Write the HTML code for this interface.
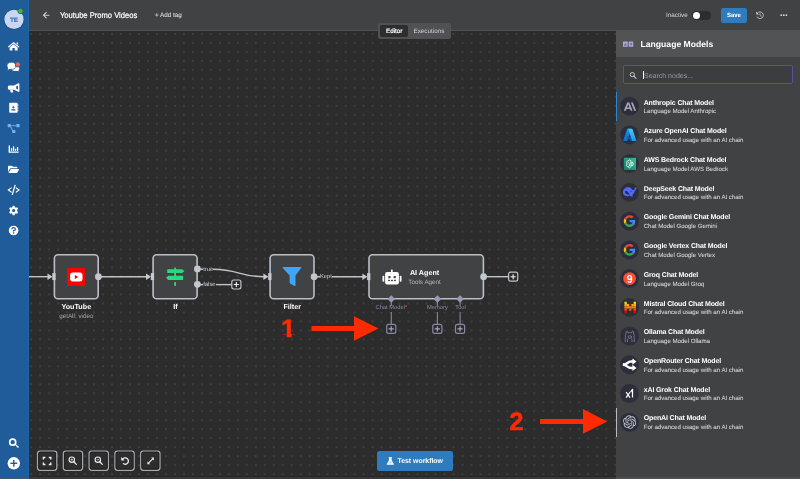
<!DOCTYPE html>
<html lang="en">
<head>
<meta charset="utf-8">
<title>Youtube Promo Videos</title>
<style>
*{box-sizing:border-box;margin:0;padding:0}
html,body{text-rendering:geometricPrecision;width:800px;height:479px;overflow:hidden;background:#2c2c2c;font-family:"Liberation Sans",sans-serif;}
.abs{position:absolute}
#app{position:relative;width:800px;height:479px;overflow:hidden;will-change:transform}
#canvas{position:absolute;left:29px;top:31px;width:771px;height:448px;background-color:#2c2c2c;
  background-image:radial-gradient(circle at 1px 1px,#5a5a5a 0.4px,rgba(90,90,90,0) 0.9px);background-size:8.99px 8.99px;background-position:1.2px 1.9px}
#side{position:absolute;left:0;top:0;width:29px;height:479px;background:#1f5c99;border-right:1px solid #1c66ad}
#top{position:absolute;left:29px;top:0;width:771px;height:31px;background:#414244;border-bottom:1px solid #515254}
#panel{position:absolute;left:616px;top:31px;width:184px;height:448px;background:#414244}
#phead{position:absolute;left:0;top:0;width:184px;height:26px;background:#525355}
.t{position:absolute;white-space:nowrap;line-height:1}
.nl{font-weight:bold;font-size:7.2px;color:#fff;text-align:center;transform:translateX(-50%)}
.ns{font-size:6.3px;color:#a4a6ad;text-align:center;transform:translateX(-50%)}
.it{position:absolute;left:27.7px;letter-spacing:-0.13px;font-weight:bold;font-size:7px;color:#fff;white-space:nowrap;line-height:1}
.is{position:absolute;left:27.7px;letter-spacing:-0.03px;font-size:6.15px;color:#d0d1d6;-webkit-text-stroke:0.08px #d0d1d6;white-space:nowrap;line-height:1}
</style>
</head>
<body>
<div id="app">
<div id="canvas"></div>

<!-- connections svg -->
<svg class="abs" style="left:0;top:0" width="800" height="479" viewBox="0 0 800 479">
 <g stroke="#c0c3cb" stroke-width="1.4" fill="none">
  <path d="M29 276.7H49"/>
  <path d="M99 276.7H147"/>
  <path d="M200 269.3H213 C238 269.3 240 276.7 264 276.7"/>
  <path d="M200 284.6H232"/>
  <path d="M317 276.7H363"/>
  <path d="M484 276.7H508"/>
 </g>
 <g stroke="#8787a3" stroke-width="1.1" fill="none">
  <path d="M391.3 302V324"/><path d="M437.4 302V324"/><path d="M460.1 302V324"/>
 </g>
 <g fill="#414244" stroke="#bcbfc8" stroke-width="1.6">
  <rect x="54.4" y="254.7" width="43.8" height="44.1" rx="3.6"/>
  <rect x="153.1" y="254.7" width="44.0" height="44.1" rx="3.6"/>
  <rect x="270.1" y="254.7" width="43.9" height="44.1" rx="3.6"/>
  <rect x="369.0" y="254.7" width="114.4" height="44.1" rx="3.6"/>
 </g>
 <g fill="#c3c6ce">
  <circle cx="98.4" cy="276.7" r="3.4"/>
  <circle cx="197.4" cy="268.9" r="3.4"/>
  <circle cx="197.4" cy="284.3" r="3.4"/>
  <circle cx="314.1" cy="276.7" r="3.4"/>
  <circle cx="483.6" cy="276.7" r="3.4"/>
 </g>
 <g>
  <rect x="231.8" y="280.0" width="9.1" height="9" rx="1.9" fill="#2c2c2c" stroke="#c0c3cb" stroke-width="1.2"/><path d="M233.8 284.5H238.9M236.35 281.95V287.05" stroke="#f0f1f3" stroke-width="1.15" fill="none"/>
  <rect x="508.6" y="272.2" width="9.1" height="9" rx="1.9" fill="#2c2c2c" stroke="#c0c3cb" stroke-width="1.2"/><path d="M510.6 276.7H515.7M513.15 274.15V279.25" stroke="#f0f1f3" stroke-width="1.15" fill="none"/>
  <rect x="386.7" y="324.4" width="9.1" height="9" rx="1.9" fill="#2c2c2c" stroke="#8888a6" stroke-width="1.2"/><path d="M388.7 328.9H393.8M391.25 326.35V331.45" stroke="#a6a6c0" stroke-width="1.15" fill="none"/>
  <rect x="432.8" y="324.4" width="9.1" height="9" rx="1.9" fill="#2c2c2c" stroke="#8888a6" stroke-width="1.2"/><path d="M434.8 328.9H439.9M437.35 326.35V331.45" stroke="#a6a6c0" stroke-width="1.15" fill="none"/>
  <rect x="455.5" y="324.4" width="9.1" height="9" rx="1.9" fill="#2c2c2c" stroke="#8888a6" stroke-width="1.2"/><path d="M457.5 328.9H462.6M460.05 326.35V331.45" stroke="#a6a6c0" stroke-width="1.15" fill="none"/>
 </g>
 <!-- red arrows -->
 <g fill="#ff2a00">
  <path d="M311.5 326H354V316.2L378.5 328.5L354 340.8V331H311.5Z"/>
  <path d="M540 419H583V409L607.2 421.4L583 433.8V424H540Z"/>
 </g>
</svg>

<!-- nodes -->



<!-- node icons -->
<svg class="abs" style="left:66.9px;top:267.7px" width="18.5" height="18.5" viewBox="0 0 18.5 18.5"><rect width="18.5" height="18.5" fill="#f00"/><rect x="3.1" y="4.6" width="12.4" height="8.8" rx="2.6" fill="#fff"/><path d="M7.8 7.1L11.3 9L7.8 10.9Z" fill="#f00"/></svg>
<svg class="abs" style="left:165px;top:267px" width="21" height="20" viewBox="165 267 21 20"><g fill="#30d67a"><rect x="174.2" y="267.5" width="1.8" height="12.4" rx="0.5"/><rect x="174.2" y="282.1" width="1.8" height="3.9" rx="0.5"/><path d="M167.9 269.2H182.2L184.4 271.15L182.2 273.1H167.9Q167.2 273.1 167.2 272.4V269.9Q167.2 269.2 167.9 269.2Z"/><path d="M182.5 275.7H168.2L166 277.8L168.2 279.9H182.5Q183.2 279.9 183.2 279.2V276.4Q183.2 275.7 182.5 275.7Z"/></g></svg>
<svg class="abs" style="left:281px;top:266px" width="22" height="22" viewBox="281 266 22 22"><path d="M283.3 267.1H300.7Q302 267.1 301.2 268.1L295.5 275.6V285.4Q295.5 286.5 294.6 285.9L290.1 283.4Q289.6 283.1 289.6 282.5V275.6L282.8 268.1Q282 267.1 283.3 267.1Z" fill="#3fa5f6"/></svg>
<svg class="abs" style="left:382px;top:269px" width="20" height="16" viewBox="382 269 20 16"><g fill="#fff"><rect x="391" y="269.4" width="1.7" height="3.4" rx="0.5"/><rect x="382.5" y="275.7" width="1.8" height="6.1" rx="0.7"/><rect x="399.7" y="275.7" width="1.8" height="6.1" rx="0.7"/><rect x="385.1" y="272" width="13.8" height="12.4" rx="2"/></g><g fill="#414244"><rect x="388.3" y="276" width="2.2" height="2.2" rx="0.5"/><rect x="393.6" y="276" width="2.2" height="2.2" rx="0.5"/><rect x="388.1" y="279.8" width="1.9" height="1.3"/><rect x="391" y="279.8" width="1.9" height="1.3"/><rect x="393.9" y="279.8" width="1.9" height="1.3"/></g></svg>

<!-- node labels -->
<div class="t nl" style="left:76.3px;top:303px">YouTube</div>
<div class="t ns" style="left:76.3px;top:314px">getAll: video</div>
<div class="t nl" style="left:175.4px;top:303px">If</div>
<div class="t nl" style="left:292.2px;top:303px">Filter</div>
<div class="t" style="left:409.9px;top:269.2px;font-weight:bold;font-size:7.2px;color:#fff">AI Agent</div>
<div class="t" style="left:408.3px;top:280px;font-size:6.3px;color:#b4b6bd">Tools Agent</div>
<div class="t" style="left:203.2px;top:268px;font-size:5.9px;color:#d0d2d8;background:#2c2c2c">true</div>
<div class="t" style="left:203.2px;top:283.4px;font-size:5.9px;color:#d0d2d8;background:#2c2c2c">false</div>
<div class="t" style="left:319.9px;top:275px;font-size:5.8px;color:#d0d2d8;background:#2c2c2c">Kept</div>
<div class="t" style="left:375.5px;top:306px;font-size:5.75px;color:#8c8ca8;background:#2c2c2c">Chat Model<span style="color:#ff4a4a">*</span></div>
<div class="t" style="left:427.1px;top:306px;font-size:5.75px;color:#8c8ca8;background:#2c2c2c">Memory</div>
<div class="t" style="left:455.3px;top:306px;font-size:5.75px;color:#8c8ca8;background:#2c2c2c">Tool</div>

<div class="t" id="n1" style="left:281.2px;top:317px;clip-path:polygon(0 0,100% 0,100% 17.5px,10.45px 17.5px,10.45px 100%,5.5px 100%,5.5px 17.5px,0 17.5px);font-weight:bold;font-size:25px;-webkit-text-stroke:0.6px #ff2a00;color:#ff2a00">1</div>
<div class="t" id="n2" style="left:509.5px;top:410px;font-weight:bold;font-size:25px;-webkit-text-stroke:0.6px #ff2a00;color:#ff2a00">2</div>

<!-- canvas controls -->

<!-- test workflow -->
<div class="abs" style="left:377px;top:451px;width:76px;height:20px;border-radius:2.5px;background:#2f7bc0"></div>
<div class="t" style="left:397.5px;top:459.4px;font-weight:bold;font-size:6.9px;color:#fff">Test workflow</div>

<!-- top bar -->
<div id="top"></div>
<div class="t" style="left:60px;top:11px;font-size:8.3px;transform:scaleX(0.915);transform-origin:0 0;-webkit-text-stroke:0.2px #fff;color:#fff">Youtube Promo Videos</div>
<div class="t" style="left:155px;top:12.9px;font-size:6.3px;color:#d4d6da;-webkit-text-stroke:0.12px #d4d6da">+ Add tag</div>
<div class="abs" style="left:378px;top:23px;width:73px;height:16px;border-radius:2.5px;background:#505153"></div>
<div class="abs" style="left:380px;top:25px;width:28px;height:12px;border-radius:2px;background:#2d2e2f"></div>
<div class="t" style="left:386px;top:29px;font-size:6.3px;-webkit-text-stroke:0.2px #fff;color:#fff">Editor</div>
<div class="t" style="left:413.5px;top:29px;font-size:6.3px;color:#d2d4d9">Executions</div>
<div class="t" style="left:666px;top:13px;font-size:6.3px;color:#d6d7db">Inactive</div>
<div class="abs" style="left:692px;top:11.2px;width:19px;height:8.6px;border-radius:4.3px;background:#2c2d2e"></div>
<div class="abs" style="left:692.6px;top:11.6px;width:7.8px;height:7.8px;border-radius:50%;background:#fff"></div>
<div class="abs" style="left:721px;top:8px;width:26px;height:14.6px;border-radius:2px;background:#2f7bc0"></div>
<div class="t" style="left:727px;top:13px;font-weight:bold;font-size:6px;letter-spacing:-0.1px;color:#fff">Save</div>

<!-- right panel -->
<div id="panel">
 <div id="phead"></div>
 <div class="t" style="left:24.6px;top:8.7px;font-weight:bold;font-size:8.6px;color:#fff">Language Models</div>
 <div class="abs" style="left:7px;top:34px;width:170px;height:19px;border:1px solid #5b509e;border-radius:2px;background:#3c3d3f"></div>
 <div class="t" style="left:28px;top:41.6px;font-size:7px;color:#9a9ca4">Search nodes...</div>
 <div class="abs" style="left:27.3px;top:40.2px;width:0.7px;height:7.6px;background:#fff"></div>
 <div class="abs" style="left:0;top:61px;width:1px;height:29px;background:#2b87d4"></div>
 <div class="abs" style="left:0;top:376.5px;width:1px;height:29px;background:#b8bac2"></div>
 <div class="it" style="top:69px">Anthropic Chat Model</div>
 <div class="is" style="top:78px">Language Model Anthropic</div>
 <div class="it" style="top:97px">Azure OpenAI Chat Model</div>
 <div class="is" style="top:107px">For advanced usage with an AI chain</div>
 <div class="it" style="top:126px">AWS Bedrock Chat Model</div>
 <div class="is" style="top:136px">Language Model AWS Bedrock</div>
 <div class="it" style="top:155px">DeepSeek Chat Model</div>
 <div class="is" style="top:164px">For advanced usage with an AI chain</div>
 <div class="it" style="top:183px">Google Gemini Chat Model</div>
 <div class="is" style="top:193px">Chat Model Google Gemini</div>
 <div class="it" style="top:212px">Google Vertex Chat Model</div>
 <div class="is" style="top:222px">Chat Model Google Vertex</div>
 <div class="it" style="top:241px">Groq Chat Model</div>
 <div class="is" style="top:251px">Language Model Groq</div>
 <div class="it" style="top:270px">Mistral Cloud Chat Model</div>
 <div class="is" style="top:279px">For advanced usage with an AI chain</div>
 <div class="it" style="top:298px">Ollama Chat Model</div>
 <div class="is" style="top:308px">Language Model Ollama</div>
 <div class="it" style="top:327px">OpenRouter Chat Model</div>
 <div class="is" style="top:337px">For advanced usage with an AI chain</div>
 <div class="it" style="top:356px">xAI Grok Chat Model</div>
 <div class="is" style="top:365px">For advanced usage with an AI chain</div>
 <div class="it" style="top:384px">OpenAI Chat Model</div>
 <div class="is" style="top:394px">For advanced usage with an AI chain</div>
</div>

<!-- LIST ICONS -->
<svg class="abs" style="left:0;top:0" width="800" height="479" viewBox="0 0 800 479">
<defs><linearGradient id="azr" x1="0" y1="0" x2="0" y2="1"><stop offset="0" stop-color="#3ccbf4"/><stop offset="1" stop-color="#2892df"/></linearGradient><linearGradient id="azl" x1="0" y1="0" x2="0" y2="1"><stop offset="0" stop-color="#1a8fe6"/><stop offset="1" stop-color="#0a6fcc"/></linearGradient><linearGradient id="aws" x1="0" y1="1" x2="1" y2="0"><stop offset="0" stop-color="#167a64"/><stop offset="1" stop-color="#33c29a"/></linearGradient><linearGradient id="mis" x1="0" y1="0" x2="0" y2="1"><stop offset="0" stop-color="#ffd800"/><stop offset="0.5" stop-color="#ff8205"/><stop offset="1" stop-color="#e10500"/></linearGradient></defs>
<g fill="#2d2e3b"><circle cx="629.5" cy="106.10" r="9.4"/><circle cx="629.5" cy="134.84" r="9.4"/><circle cx="629.5" cy="163.58" r="9.4"/><circle cx="629.5" cy="192.32" r="9.4"/><circle cx="629.5" cy="221.06" r="9.4"/><circle cx="629.5" cy="249.80" r="9.4"/><circle cx="629.5" cy="278.54" r="9.4"/><circle cx="629.5" cy="307.28" r="9.4"/><circle cx="629.5" cy="336.02" r="9.4"/><circle cx="629.5" cy="364.76" r="9.4"/><circle cx="629.5" cy="393.50" r="9.4"/><circle cx="629.5" cy="422.24" r="9.4"/></g>

<g transform="translate(629.9 106.6)" fill="#a6a6b6"><path fill-rule="evenodd" d="M-6.1 4.2L-2.7 -4.2H-0.7L2.7 4.2H0.8L0.1 2.4H-3.5L-4.2 4.2Z M-2.9 0.9H-0.5L-1.7 -2.3Z"/><path d="M1 -4.2H2.9L6.3 4.2H4.4Z"/></g>
<g transform="translate(629.8000000000001 134.94) scale(0.147) translate(-48 -48)"><path fill="url(#azl)" d="M33.338 6.544h26.038l-27.03 80.087a4.152 4.152 0 0 1-3.933 2.824H8.149a4.145 4.145 0 0 1-3.928-5.47L29.404 9.368a4.152 4.152 0 0 1 3.934-2.825z"/><path fill="#0a5aa8" d="M71.175 60.261h-41.29a1.911 1.911 0 0 0-1.305 3.309l26.532 24.764a4.171 4.171 0 0 0 2.846 1.121h23.38z"/><path fill="url(#azr)" d="M66.595 9.364a4.145 4.145 0 0 0-3.928-2.82H33.648a4.146 4.146 0 0 1 3.928 2.82l25.184 74.62a4.146 4.146 0 0 1-3.928 5.472h29.02a4.146 4.146 0 0 0 3.927-5.472z"/></g>
<g transform="translate(629.9 163.88)"><rect x="-6.1" y="-6.1" width="12.2" height="12.2" fill="url(#aws)"/><g fill="none" stroke="#fff" stroke-width="0.75" stroke-linejoin="round"><path d="M-0.4 -4L-3.2 -2.2V2.2L-0.4 4L1 3.1V-3.1Z"/><path d="M-1.8 -1.4Q0 -0.6 -0.2 1.2Q-0.4 2.4 -1.8 2.6"/><path d="M1 -1.6H2.6M1 0H3.2M1 1.6H2.6"/></g><g fill="#fff"><circle cx="2.8" cy="-1.6" r="0.6"/><circle cx="3.3" cy="0" r="0.6"/><circle cx="2.8" cy="1.6" r="0.6"/></g></g>
<g transform="translate(629.6 192.01999999999998)" fill="#4d6bfe"><path d="M-6.6 0.4C-6.6 -2.8 -4.4 -4.8 -1.4 -4.8C0.4 -4.8 1.4 -4.2 2.2 -3C2.8 -2 3.4 -1.6 4.2 -2C5.2 -2.6 5.4 -3.8 5 -4.8C5.8 -4.2 6.4 -4.4 6.9 -5C7.1 -3.4 6.4 -2 5.2 -1C4.8 0.6 4 1.8 3 2.6C2.6 3.2 2.8 3.8 3.6 4.4C2 4.8 0.8 4.4 0 3.6C-1.4 4.6 -3.4 4.6 -4.8 3.6C-6 2.8 -6.6 1.8 -6.6 0.4Z"/></g>
<g transform="translate(629.6 192.01999999999998)" fill="#2e2f3d"><path d="M-4.7 -0.2C-4.3 -1.5 -3 -1.6 -2.2 -0.6C-1.4 0.6 -0.6 1.5 0.4 2.2C-0.8 2.9 -2.4 2.6 -3.6 1.7C-4.4 1 -4.8 0.5 -4.7 -0.2Z"/><circle cx="1.4" cy="-0.6" r="0.55"/><path d="M2.2 -3.3L3.2 -2.5L2.6 -2.2Z"/></g>
<g transform="translate(629.6 221.06) scale(0.244) translate(-24 -24)"><path fill="#EA4335" d="M24 9.5c3.54 0 6.71 1.22 9.21 3.6l6.85-6.85C35.9 2.38 30.47 0 24 0 14.62 0 6.51 5.38 2.56 13.22l7.98 6.19C12.43 13.72 17.74 9.5 24 9.5z"/><path fill="#4285F4" d="M46.98 24.55c0-1.57-.15-3.09-.38-4.55H24v9.02h12.94c-.58 2.96-2.26 5.48-4.78 7.18l7.73 6c4.51-4.18 7.09-10.36 7.09-17.65z"/><path fill="#FBBC05" d="M10.53 28.59c-.48-1.45-.76-2.99-.76-4.59s.27-3.14.76-4.59l-7.98-6.19C.92 16.46 0 20.12 0 24c0 3.88.92 7.54 2.56 10.78l7.97-6.19z"/><path fill="#34A853" d="M24 48c6.48 0 11.93-2.13 15.89-5.81l-7.73-6c-2.15 1.45-4.92 2.3-8.16 2.3-6.26 0-11.57-4.22-13.47-9.91l-7.98 6.19C6.51 42.62 14.62 48 24 48z"/></g>
<g transform="translate(629.6 249.79999999999998) scale(0.244) translate(-24 -24)"><path fill="#EA4335" d="M24 9.5c3.54 0 6.71 1.22 9.21 3.6l6.85-6.85C35.9 2.38 30.47 0 24 0 14.62 0 6.51 5.38 2.56 13.22l7.98 6.19C12.43 13.72 17.74 9.5 24 9.5z"/><path fill="#4285F4" d="M46.98 24.55c0-1.57-.15-3.09-.38-4.55H24v9.02h12.94c-.58 2.96-2.26 5.48-4.78 7.18l7.73 6c4.51-4.18 7.09-10.36 7.09-17.65z"/><path fill="#FBBC05" d="M10.53 28.59c-.48-1.45-.76-2.99-.76-4.59s.27-3.14.76-4.59l-7.98-6.19C.92 16.46 0 20.12 0 24c0 3.88.92 7.54 2.56 10.78l7.97-6.19z"/><path fill="#34A853" d="M24 48c6.48 0 11.93-2.13 15.89-5.81l-7.73-6c-2.15 1.45-4.92 2.3-8.16 2.3-6.26 0-11.57-4.22-13.47-9.91l-7.98 6.19C6.51 42.62 14.62 48 24 48z"/></g>
<g transform="translate(629.6 278.53999999999996)"><circle r="6.4" fill="#f55036"/><circle cx="0" cy="-1.1" r="1.9" fill="none" stroke="#fff" stroke-width="1.3"/><path d="M1.9 -1.1V1.6Q1.9 3.6 0 3.6Q-1 3.6 -1.8 3" fill="none" stroke="#fff" stroke-width="1.3"/></g>
<g transform="translate(630.2 307.38)"><rect x="-5.75" y="-5.65" width="2.3499999999999996" height="2.31" fill="#ffd800"/><rect x="3.45" y="-5.65" width="2.3499999999999996" height="2.31" fill="#ffd800"/><rect x="-5.75" y="-3.39" width="2.3499999999999996" height="2.31" fill="#ffaf00"/><rect x="-3.45" y="-3.39" width="2.3499999999999996" height="2.31" fill="#ffaf00"/><rect x="1.15" y="-3.39" width="2.3499999999999996" height="2.31" fill="#ffaf00"/><rect x="3.45" y="-3.39" width="2.3499999999999996" height="2.31" fill="#ffaf00"/><rect x="-5.75" y="-1.13" width="2.3499999999999996" height="2.31" fill="#ff8205"/><rect x="-3.45" y="-1.13" width="2.3499999999999996" height="2.31" fill="#ff8205"/><rect x="-1.15" y="-1.13" width="2.3499999999999996" height="2.31" fill="#ff8205"/><rect x="1.15" y="-1.13" width="2.3499999999999996" height="2.31" fill="#ff8205"/><rect x="3.45" y="-1.13" width="2.3499999999999996" height="2.31" fill="#ff8205"/><rect x="-5.75" y="1.13" width="2.3499999999999996" height="2.31" fill="#fa500f"/><rect x="-1.15" y="1.13" width="2.3499999999999996" height="2.31" fill="#fa500f"/><rect x="3.45" y="1.13" width="2.3499999999999996" height="2.31" fill="#fa500f"/><rect x="-5.75" y="3.39" width="2.3499999999999996" height="2.31" fill="#e10500"/><rect x="3.45" y="3.39" width="2.3499999999999996" height="2.31" fill="#e10500"/></g>
<g transform="translate(629.8000000000001 336.32)" fill="none" stroke="#80829a" stroke-width="0.8" stroke-linecap="round"><path d="M-4.4 5.4Q-5 3 -4.2 1.2Q-5 -1 -3.8 -2.4Q-4.2 -5 -3 -5.4Q-2 -5 -1.8 -3.4Q0 -4 1.8 -3.4Q2 -5 3 -5.4Q4.2 -5 3.8 -2.4Q5 -1 4.2 1.2Q5 3 4.4 5.4"/><ellipse cx="0" cy="0.6" rx="1.7" ry="1.3"/><path d="M-2.2 5.4Q-2.6 3.6 -2 2.6M2.2 5.4Q2.6 3.6 2 2.6"/></g>
<g transform="translate(629.6 364.76)"><g fill="none" stroke="#fff" stroke-width="2.5"><path d="M-6.7 0C-2.6 0 -2.4 -3.2 1.6 -3.2H3.4"/><path d="M-6.7 0C-2.6 0 -2.4 3.2 1.6 3.2H3.4"/></g><path d="M2.8 -6.3L7 -3.2L2.8 -0.1Z M2.8 6.3L7 3.2L2.8 0.1Z M-6.7 -1.2H-4V1.2H-6.7Z" fill="#fff"/></g>
<g transform="translate(629.6 393.5)" stroke="#fff" stroke-width="1.25" fill="none"><path d="M-3.5 -1.5L0.3 4.1M0.5 -1.5L-3.5 4.1M2.9 -4.3V4.1M1 -1.6L3.3 -4.5"/></g>
<g transform="translate(629.6 422.04) scale(0.56) translate(-12 -12)" fill="#c9cbd2"><path d="M22.2819 9.8211a5.9847 5.9847 0 0 0-.5157-4.9108 6.0462 6.0462 0 0 0-6.5098-2.9A6.0651 6.0651 0 0 0 4.9807 4.1818a5.9847 5.9847 0 0 0-3.9977 2.9 6.0462 6.0462 0 0 0 .7427 7.0966 5.98 5.98 0 0 0 .511 4.9107 6.051 6.051 0 0 0 6.5146 2.9001A5.9847 5.9847 0 0 0 13.2599 24a6.0557 6.0557 0 0 0 5.7718-4.2058 5.9894 5.9894 0 0 0 3.9977-2.9001 6.0557 6.0557 0 0 0-.7475-7.0729zm-9.022 12.6081a4.4755 4.4755 0 0 1-2.8764-1.0408l.1419-.0804 4.7783-2.7582a.7948.7948 0 0 0 .3927-.6813v-6.7369l2.02 1.1686a.071.071 0 0 1 .038.052v5.5826a4.504 4.504 0 0 1-4.4945 4.4944zm-9.6607-4.1254a4.4708 4.4708 0 0 1-.5346-3.0137l.142.0852 4.783 2.7582a.7712.7712 0 0 0 .7806 0l5.8428-3.3685v2.3324a.0804.0804 0 0 1-.0332.0615L9.74 19.9502a4.4992 4.4992 0 0 1-6.1408-1.6464zM2.3408 7.8956a4.485 4.485 0 0 1 2.3655-1.9728V11.6a.7664.7664 0 0 0 .3879.6765l5.8144 3.3543-2.0201 1.1685a.0757.0757 0 0 1-.071 0l-4.8303-2.7865A4.504 4.504 0 0 1 2.3408 7.872zm16.5963 3.8558L13.1038 8.364 15.1192 7.2a.0757.0757 0 0 1 .071 0l4.8303 2.7913a4.4944 4.4944 0 0 1-.6765 8.1042v-5.6772a.79.79 0 0 0-.407-.667zm2.0107-3.0231l-.142-.0852-4.7735-2.7818a.7759.7759 0 0 0-.7854 0L9.409 9.2297V6.8974a.0662.0662 0 0 1 .0284-.0615l4.8303-2.7866a4.4992 4.4992 0 0 1 6.6802 4.66zM8.3065 12.863l-2.02-1.1638a.0804.0804 0 0 1-.038-.0567V6.0742a4.4992 4.4992 0 0 1 7.3757-3.4537l-.142.0805L8.704 5.459a.7948.7948 0 0 0-.3927.6813zm1.0976-2.3654l2.602-1.4998 2.6069 1.4998v2.9994l-2.5974 1.4997-2.6067-1.4997Z"/></g>
</svg>
<!-- ICONS -->
<svg class="abs" style="left:0;top:0" width="800" height="479" viewBox="0 0 800 479">
 <g fill="#c6c9d0">
  <path d="M47.5 273.5L52.6 276.7L47.5 279.9Z"/><rect x="52.3" y="273.1" width="3.3" height="7"/>
  <path d="M146.0 273.5L151.1 276.7L146.0 279.9Z"/><rect x="150.8" y="273.1" width="3.3" height="7"/>
  <path d="M263.4 273.5L268.5 276.7L263.4 279.9Z"/><rect x="268.2" y="273.1" width="3.3" height="7"/>
  <path d="M362.3 273.5L367.4 276.7L362.3 279.9Z"/><rect x="367.1" y="273.1" width="3.3" height="7"/>
 </g>
 <g fill="#9898b6">
  <path d="M391.3 295.2L395.1 299L391.3 302.8L387.5 299Z"/>
  <path d="M437.4 295.2L441.2 299L437.4 302.8L433.6 299Z"/>
  <path d="M460.1 295.2L463.9 299L460.1 302.8L456.3 299Z"/>
 </g>
 <!-- back arrow -->
 <g stroke="#c8cad2" stroke-width="1.1" fill="none" stroke-linecap="round" stroke-linejoin="round">
  <path d="M43.4 15.2H49M46.2 12.5L43.4 15.2L46.2 17.9"/>
 </g>
 <!-- history -->
 <g stroke="#c8cace" stroke-width="0.9" fill="none">
  <path d="M757.4 13.2A3.3 3.3 0 1 1 757 16.6"/>
  <path d="M760 13.4V15.4L761.3 16.3" stroke-width="0.8"/>
 </g>
 <path d="M756.2 11.6V14.4H759Z" fill="#c8cace"/>
 <g fill="#dcdde0"><circle cx="781.2" cy="15.2" r="0.85"/><circle cx="783.8" cy="15.2" r="0.85"/><circle cx="786.4" cy="15.2" r="0.85"/></g>
 <!-- panel header icon -->
 <g fill="#a9a9d8"><rect x="623" y="41.5" width="4.8" height="5.2" rx="0.5"/><rect x="628.7" y="41.5" width="4.6" height="5.2" rx="0.5"/></g>
 <g fill="#5c5c84"><path d="M625.4 42.9L626.8 45.4H624Z"/><path d="M629.8 43.2H632.4L631.1 45.4Z"/></g>
 <!-- search icon -->
 <circle cx="632.3" cy="74.6" r="2.1" fill="none" stroke="#c8cad0" stroke-width="1"/>
 <path d="M633.9 76.2L636 78.3" stroke="#c8cad0" stroke-width="1.1" stroke-linecap="round"/>
 <g fill="none" stroke="#a8aab1" stroke-width="1.4">
  <rect x="37.6" y="451.1" width="19.1" height="19.1" rx="2.4"/>
  <rect x="63.4" y="451.1" width="19.1" height="19.1" rx="2.4"/>
  <rect x="89.2" y="451.1" width="19.1" height="19.1" rx="2.4"/>
  <rect x="115.0" y="451.1" width="19.1" height="19.1" rx="2.4"/>
  <rect x="140.8" y="451.1" width="19.1" height="19.1" rx="2.4"/>
 </g>
 <g fill="#2d2d2d" stroke="#1c1c1c" stroke-width="0.8">
  <rect x="38.6" y="452.1" width="17.1" height="17.1" rx="1.6"/>
  <rect x="64.4" y="452.1" width="17.1" height="17.1" rx="1.6"/>
  <rect x="90.2" y="452.1" width="17.1" height="17.1" rx="1.6"/>
  <rect x="116.0" y="452.1" width="17.1" height="17.1" rx="1.6"/>
  <rect x="141.8" y="452.1" width="17.1" height="17.1" rx="1.6"/>
 </g>
 <!-- canvas controls -->
 <g stroke="#eeeff1" stroke-width="1.1" fill="none">
  <path d="M43.4 459.5V457.5H45.4M48.8 457.5H50.8V459.5M50.8 462.5V464.5H48.8M45.4 464.5H43.4V462.5" stroke-width="1.4"/>
  <circle cx="71.8" cy="459.7" r="2.7"/><path d="M73.8 461.8L76.3 464.4" stroke-linecap="round" stroke-width="1.3"/>
  <circle cx="97.8" cy="459.7" r="2.7"/><path d="M99.8 461.8L102.3 464.4" stroke-linecap="round" stroke-width="1.3"/>
  <path d="M70.6 459.7H73M71.8 458.5V460.9M96.6 459.7H99" stroke-width="0.7"/>
  <path d="M122.6 459.2A3.2 3.2 0 1 1 123 463.4" stroke-width="1.3"/>
  <path d="M148.4 463.1L152.9 458.7" stroke-width="1.1"/>
 </g>
 <path d="M121.2 457V460.4H124.6Z" fill="#e8e9ec"/>
 <path d="M153.9 457.6V460.4L151.1 457.6Z M147.4 464.2V461.4L150.2 464.2Z" fill="#e8e9ec"/>
 <!-- flask -->
 <path d="M388.6 457.2H392V457.9H391.6V460L393.8 463.9Q394.2 464.8 393.2 464.8H387.4Q386.4 464.8 386.8 463.9L389 460V457.9H388.6Z" fill="#fff"/>
 <path d="M388.6 461.6H392L393 463.6H387.6Z" fill="#2f7bc0" opacity="0.3"/>
</svg>
<div id="side"></div>
<svg class="abs" style="left:0;top:0" width="29" height="479" viewBox="0 0 29 479">
 <!-- avatar -->
 <circle cx="14" cy="19.4" r="10.3" fill="#174f8a"/>
 <circle cx="14" cy="19.4" r="9.6" fill="#c9d8f0"/>
 <circle cx="20.4" cy="11" r="2.9" fill="#1f5c99"/>
 <circle cx="20.4" cy="11" r="2.3" fill="#4cb71a"/>
 <g fill="#fff">
  <!-- home -->
  <path d="M13.6 41.9L19.4 46.7L18.6 47.6L13.6 43.5L8.6 47.6L7.8 46.7Z"/>
  <path d="M16.6 42.4H18.1V45L16.6 43.8Z"/>
  <path d="M13.6 44.2L17.6 47.5V50.4H14.8V47.9H12.4V50.4H9.6V47.5Z"/>
  <!-- chat -->
  <ellipse cx="15.3" cy="68.3" rx="3.9" ry="2.7"/>
  <path d="M17.6 69.6L19.3 71.3L16.4 70.8Z"/>
  <ellipse cx="11.5" cy="65.8" rx="4.5" ry="3.5" stroke="#1f5c99" stroke-width="0.7"/>
  <path d="M8.4 67.4L7.5 69.7L10.6 68.8Z"/>
  <!-- megaphone -->
  <path d="M18.4 83.2Q19.4 83 19.4 84V91.2Q19.4 92.2 18.4 91.8L14 89.8H9.4Q7.9 89.8 7.9 88.4V86.8Q7.9 85.4 9.4 85.4H14Z"/>
  <path d="M10 89.8H12.6L13.4 92.4H10.8Z"/>
  <!-- address book -->
  <path d="M10 102.8H16.8Q17.6 102.8 17.6 103.6V112Q17.6 112.8 16.8 112.8H10Q9.2 112.8 9.2 112V103.6Q9.2 102.8 10 102.8Z"/>
  <rect x="17.6" y="104.2" width="0.7" height="1.8"/><rect x="17.6" y="106.8" width="0.7" height="1.8"/><rect x="17.6" y="109.4" width="0.7" height="1.8"/>
  <!-- chart -->
  <path d="M8.6 145.4H10V151.4H18.6V152.8H8.6Z"/>
  <rect x="10.9" y="148.2" width="1.3" height="2.6"/><rect x="12.9" y="146.4" width="1.3" height="4.4"/><rect x="14.9" y="148.8" width="1.3" height="2"/><rect x="16.9" y="147" width="1.3" height="3.8"/>
  <!-- folder open -->
  <path d="M8.9 165.7H11.9L13 166.8H16.6Q17.4 166.8 17.4 167.6V168.2H10.8Q10 168.2 9.7 168.9L8 172V166.6Q8 165.7 8.9 165.7Z"/>
  <path d="M10.9 169H18.6Q19.4 169 19 169.8L17.4 172.6Q17.1 173.1 16.5 173.1H8.4Z"/>
  <!-- code -->
  <path d="M11.2 187.2L12 188.1L9.3 190L12 191.9L11.2 192.8L7.4 190Z"/>
  <path d="M16.2 187.2L15.4 188.1L18.1 190L15.4 191.9L16.2 192.8L20 190Z"/>
  <path d="M14.6 184.8L15.8 185.1L12.8 195L11.6 194.7Z"/>
  <!-- gear -->
  <path d="M12.7 205.8H14.5L14.8 207.1L15.9 207.7L17.2 207.3L18.1 208.9L17.1 209.8V211.2L18.1 212.1L17.2 213.7L15.9 213.3L14.8 213.9L14.5 215.2H12.7L12.4 213.9L11.3 213.3L10 213.7L9.1 212.1L10.1 211.2V209.8L9.1 208.9L10 207.3L11.3 207.7L12.4 207.1Z"/>
  <!-- question -->
  <circle cx="13.6" cy="230.5" r="4.8"/>
  <!-- search -->
  <path d="M15.4 445.4L16.4 444.4L19 447L18 448Z"/>
  <!-- plus circle -->
  <circle cx="13.8" cy="463.3" r="6.2"/>
 </g>
 <circle cx="12.7" cy="442.2" r="3" fill="none" stroke="#fff" stroke-width="1.7"/>
 <g fill="#1f5c99">
  <circle cx="13.6" cy="210.5" r="1.6"/>
  <rect x="12.3" y="106.2" width="2.2" height="2.2" rx="1.1"/><rect x="11.3" y="109.3" width="4.2" height="1.3" rx="0.5"/>
  <path d="M16.2 86.4L18 85.6V89.6L16.2 88.8Z"/>
  <rect x="13.1" y="459.9" width="1.4" height="6.8"/><rect x="10.4" y="462.6" width="6.8" height="1.4"/>
  <rect x="12.9" y="232.3" width="1.4" height="1.3"/>
 </g>
 <path d="M11.9 229.3Q11.9 227.6 13.6 227.6Q15.4 227.6 15.4 229.2Q15.4 230.2 13.6 230.7V231.5" fill="none" stroke="#1f5c99" stroke-width="1.2"/>
 <circle cx="17.9" cy="64.4" r="2.9" fill="#1f5c99"/>
 <circle cx="17.9" cy="64.4" r="2.2" fill="#f0645a"/>
 <!-- workflow -->
 <g fill="#6cb4f5">
  <rect x="7.7" y="124.1" width="3.2" height="3.2" rx="0.4"/><rect x="16.4" y="124.1" width="3.2" height="3.2" rx="0.4"/><rect x="12.2" y="129.9" width="3.2" height="3.2" rx="0.4"/>
  <rect x="10.9" y="125.3" width="5.5" height="0.9"/>
  <path d="M10.3 127.3L11.2 127L13 130L12.2 130.4Z"/>
 </g>
</svg>
<div class="t" style="left:9.9px;top:18px;font-weight:bold;font-size:6.3px;color:#3f6ec4;-webkit-text-stroke:0.15px #3f6ec4;letter-spacing:0.1px">TE</div>
<div class="abs" style="left:29px;top:476px;width:587px;height:1px;background:#272727"></div>
<div class="abs" style="left:29px;top:477px;width:771px;height:2px;background:rgba(255,255,255,0.07)"></div>
<div class="abs" style="left:0;top:478px;width:29px;height:1px;background:#46586f"></div>
</div>
</body>
</html>
